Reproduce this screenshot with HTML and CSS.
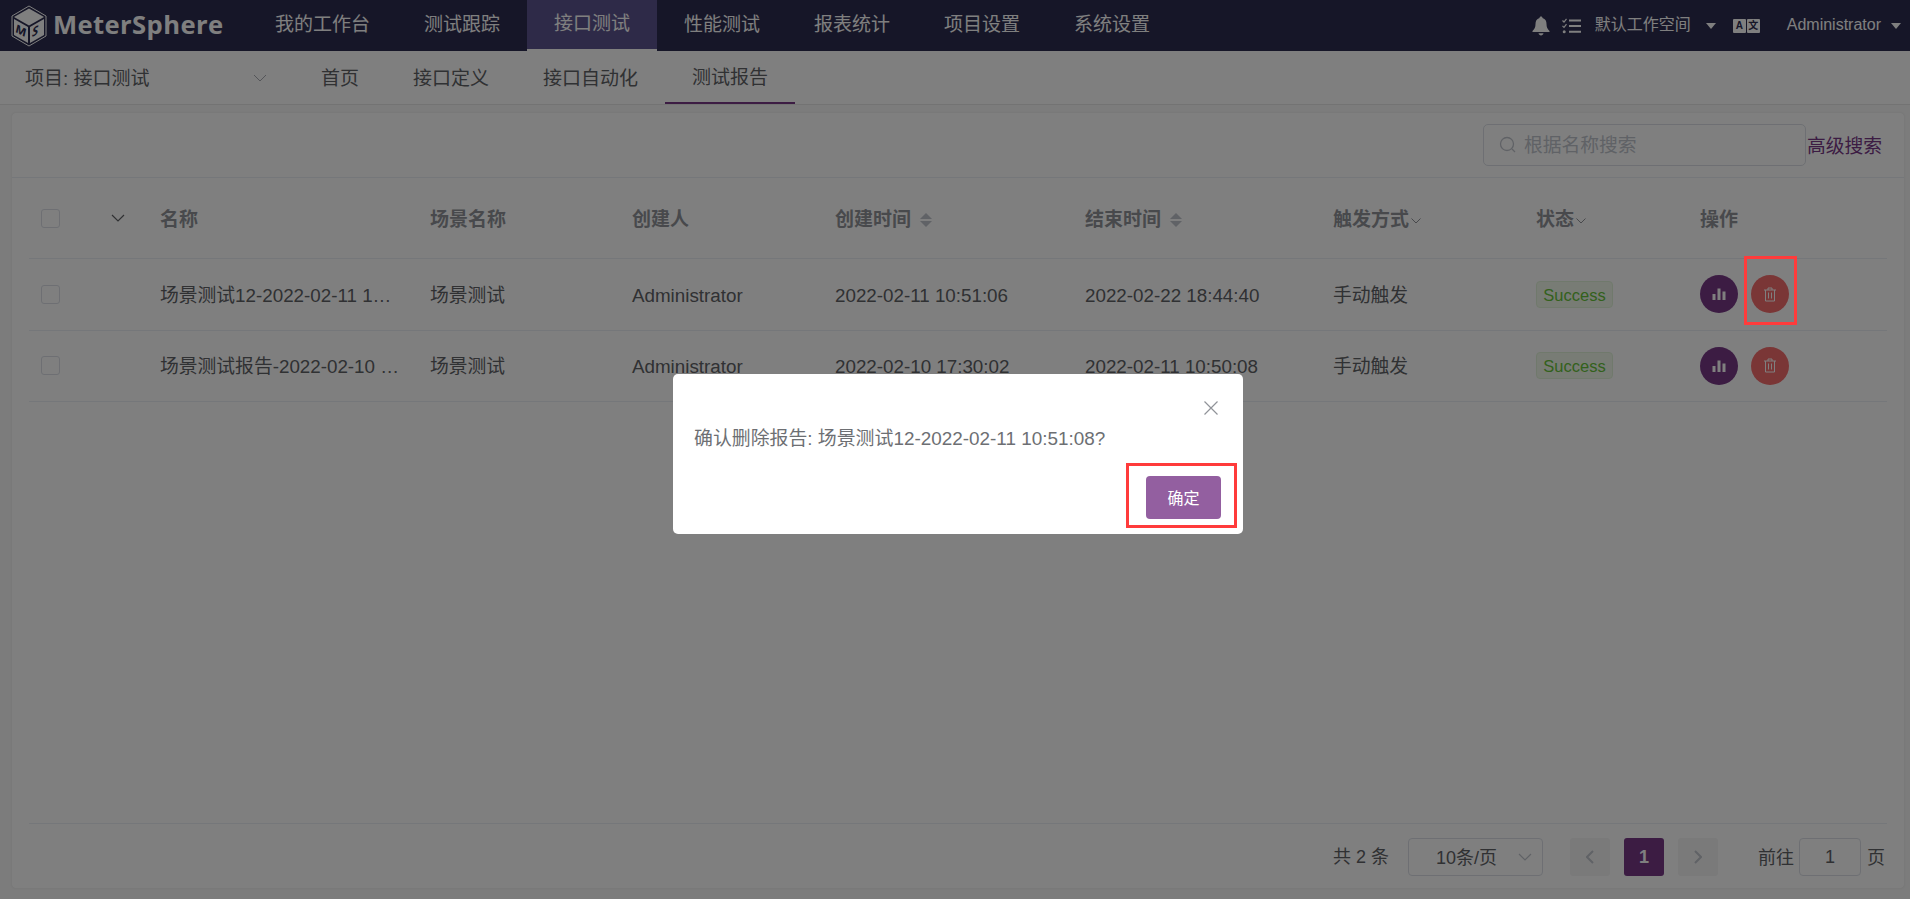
FILE: index.html
```html
<!DOCTYPE html>
<html>
    <head>
        <meta charset="utf-8" />
        <title>MeterSphere｜接口测试｜测试报告</title>
        <link rel="stylesheet" href="styles.css">
    </head>
    <body>
        <!-- 顶部导航 -->
        <header class="topbar">
            <div class="logo">
                <svg class="logo-cube" viewBox="0 0 36 42" width="36" height="42">
                    <path d="M18 1 L35 11 V31 L18 41 L1 31 V11 Z" fill="none" stroke="#fff" stroke-width="1"/>
                    <path d="M18 3.5 L33 12 L18 20.5 L3 12 Z" fill="#fff"/>
                    <path d="M3 14 L17 22 V38 L3 30 Z" fill="#fff"/>
                    <path d="M33 14 L19 22 V38 L33 30 Z" fill="#fff"/>
                    <text class="logo-letter" transform="translate(4.5 27) skewY(28)">M</text>
                    <text class="logo-letter" transform="translate(21 32) skewY(-28)">S</text>
                </svg>
                <span class="logo-text">MeterSphere</span>
            </div>
            <nav class="main-nav">
                <a class="main-nav-item">我的工作台</a>
                <a class="main-nav-item">测试跟踪</a>
                <a class="main-nav-item active">接口测试</a>
                <a class="main-nav-item">性能测试</a>
                <a class="main-nav-item">报表统计</a>
                <a class="main-nav-item">项目设置</a>
                <a class="main-nav-item">系统设置</a>
            </nav>
            <div class="top-right">
                <svg class="top-icon bell" viewBox="0 0 18 20" width="18" height="20">
                    <path d="M9 0.5 C10 0.5 10.5 1.2 10.5 2 C13.5 2.8 14.5 5.2 14.5 8 C14.5 11.5 15.5 13 17.5 15 V16 H0.5 V15 C2.5 13 3.5 11.5 3.5 8 C3.5 5.2 4.5 2.8 7.5 2 C7.5 1.2 8 0.5 9 0.5 Z" fill="#fff"/>
                    <path d="M6.5 17.2 H11.5 C11.2 18.6 10.2 19.4 9 19.4 C7.8 19.4 6.8 18.6 6.5 17.2 Z" fill="#fff"/>
                </svg>
                <svg class="top-icon tasks" viewBox="0 0 19 16" width="19" height="16">
                    <path d="M0.5 2.5 L2 4 L4.5 0.8 M0.5 7.8 L2 9.3 L4.5 6.1" fill="none" stroke="#fff" stroke-width="1.2"/>
                    <circle cx="2.2" cy="13.8" r="1.5" fill="#fff"/>
                    <path d="M7 1.5 H19 V3.4 H7 Z M7 7 H19 V8.9 H7 Z M7 12.8 H19 V14.7 H7 Z" fill="#fff"/>
                </svg>
                <span class="workspace">默认工作空间</span>
                <i class="caret-down workspace-caret"></i>
                <span class="lang-icon"><b class="lang-a">A</b><b class="lang-b">文</b></span>
                <span class="user">Administrator</span>
                <i class="caret-down user-caret"></i>
            </div>
        </header>

        <!-- 二级导航 -->
        <div class="subbar">
            <div class="project-select">
                <span>项目: 接口测试</span>
                <svg class="chevron" viewBox="0 0 14 8" width="14" height="8"><path d="M1 1 L7 7 L13 1" fill="none" stroke="#a8abb2" stroke-width="1"/></svg>
            </div>
            <nav class="sub-nav">
                <a class="sub-nav-item">首页</a>
                <a class="sub-nav-item">接口定义</a>
                <a class="sub-nav-item">接口自动化</a>
                <a class="sub-nav-item active">测试报告</a>
            </nav>
        </div>

        <!-- 报告列表 -->
        <main class="card">
            <div class="toolbar">
                <div class="search-box">
                    <svg viewBox="0 0 18 18" width="18" height="18"><circle cx="8" cy="8" r="6.5" fill="none" stroke="#c0c4cc" stroke-width="1.3"/><path d="M13 13 L16 16" stroke="#c0c4cc" stroke-width="1.3"/></svg>
                    <span class="search-hint">根据名称搜索</span>
                </div>
                <a class="advanced-link">高级搜索</a>
            </div>

            <div class="report-table">
                <div class="row head">
                    <div class="col-check"><span class="checkbox"></span></div>
                    <div class="col-expand"><svg viewBox="0 0 14 8" width="14" height="8"><path d="M1 1 L7 7 L13 1" fill="none" stroke="#606266" stroke-width="1.2"/></svg></div>
                    <div>名称</div>
                    <div>场景名称</div>
                    <div>创建人</div>
                    <div class="sortable">创建时间<span class="sort-carets"><i></i><i></i></span></div>
                    <div class="sortable">结束时间<span class="sort-carets"><i></i><i></i></span></div>
                    <div class="filterable">触发方式<svg viewBox="0 0 10 6" width="10" height="6"><path d="M0.5 0.5 L5 5 L9.5 0.5" fill="none" stroke="#909399" stroke-width="1"/></svg></div>
                    <div class="filterable">状态<svg viewBox="0 0 10 6" width="10" height="6"><path d="M0.5 0.5 L5 5 L9.5 0.5" fill="none" stroke="#909399" stroke-width="1"/></svg></div>
                    <div>操作</div>
                </div>

                <div class="row">
                    <div class="col-check"><span class="checkbox"></span></div>
                    <div class="col-expand"></div>
                    <div class="name-cell">场景测试12-2022-02-11 1…</div>
                    <div>场景测试</div>
                    <div>Administrator</div>
                    <div>2022-02-11 10:51:06</div>
                    <div>2022-02-22 18:44:40</div>
                    <div>手动触发</div>
                    <div class="col-tag"><span class="tag-success">Success</span></div>
                    <div class="actions">
                        <button class="circle-btn report"><svg viewBox="0 0 14 14" width="14" height="14"><path d="M0.5 7 H3.5 V13 H0.5 Z M5.5 1.5 H8.5 V13 H5.5 Z M10.5 4.5 H13.5 V13 H10.5 Z" fill="#fff"/></svg></button>
                        <button class="circle-btn remove"><svg viewBox="0 0 14 15" width="14" height="15"><path d="M1 3 H13 M5 3 V1 H9 V3 M2.5 3 V14 H11.5 V3 M5.5 5.5 V11.5 M8.5 5.5 V11.5" fill="none" stroke="#fff" stroke-width="1"/></svg></button>
                    </div>
                </div>

                <div class="row">
                    <div class="col-check"><span class="checkbox"></span></div>
                    <div class="col-expand"></div>
                    <div class="name-cell">场景测试报告-2022-02-10 …</div>
                    <div>场景测试</div>
                    <div>Administrator</div>
                    <div>2022-02-10 17:30:02</div>
                    <div>2022-02-11 10:50:08</div>
                    <div>手动触发</div>
                    <div class="col-tag"><span class="tag-success">Success</span></div>
                    <div class="actions">
                        <button class="circle-btn report"><svg viewBox="0 0 14 14" width="14" height="14"><path d="M0.5 7 H3.5 V13 H0.5 Z M5.5 1.5 H8.5 V13 H5.5 Z M10.5 4.5 H13.5 V13 H10.5 Z" fill="#fff"/></svg></button>
                        <button class="circle-btn remove"><svg viewBox="0 0 14 15" width="14" height="15"><path d="M1 3 H13 M5 3 V1 H9 V3 M2.5 3 V14 H11.5 V3 M5.5 5.5 V11.5 M8.5 5.5 V11.5" fill="none" stroke="#fff" stroke-width="1"/></svg></button>
                    </div>
                </div>
            </div>

            <!-- 分页 -->
            <div class="pager">
                <span class="pager-total">共 2 条</span>
                <div class="pager-size">
                    <span>10条/页</span>
                    <svg viewBox="0 0 14 8" width="14" height="8"><path d="M1 1 L7 7 L13 1" fill="none" stroke="#c0c4cc" stroke-width="1.2"/></svg>
                </div>
                <span class="pager-btn prev"><svg viewBox="0 0 8 14" width="8" height="14"><path d="M7 1 L1 7 L7 13" fill="none" stroke="#c0c4cc" stroke-width="2"/></svg></span>
                <span class="pager-num">1</span>
                <span class="pager-btn"><svg viewBox="0 0 8 14" width="8" height="14"><path d="M1 1 L7 7 L1 13" fill="none" stroke="#c0c4cc" stroke-width="2"/></svg></span>
                <span class="pager-goto">前往</span>
                <span class="pager-input">1</span>
                <span class="pager-unit">页</span>
            </div>
        </main>

        <!-- 遮罩與確認視窗 -->
        <div class="overlay"></div>
        <div class="mark mark-delete"></div>
        <div class="dialog">
            <svg class="dialog-close" viewBox="0 0 14 14" width="14" height="14"><path d="M0.5 0.5 L13.5 13.5 M13.5 0.5 L0.5 13.5" stroke="#909399" stroke-width="1.2"/></svg>
            <p class="dialog-text">确认删除报告: 场景测试12-2022-02-11 10:51:08?</p>
            <div class="dialog-footer">
                <button class="confirm-btn">确定</button>
                <div class="mark mark-confirm"></div>
            </div>
        </div>
    </body>
</html>
```

FILE: styles.css
```css
* {
    box-sizing: border-box;
}

html, body {
    height: 100%;
}

body {
    display: flex;
    flex-direction: column;
    margin: 0;
    height: 899px;
    overflow: hidden;
    background-color: #f8f8f8;
    color: #606266;
    font-family: "Liberation Sans", "Noto Sans CJK SC", sans-serif;
    font-size: 18.8px;
    line-height: 26px;
}

/* 顶部导航 */
.topbar {
    display: flex;
    align-items: center;
    flex: none;
    height: 51px;
    background-color: #2c2c50;
    color: #fff;
}

.logo {
    display: flex;
    align-items: center;
    gap: 6px;
    flex: none;
    width: 248px;
    padding-left: 11px;
}

.logo-letter {
    font-family: "Open Sans", sans-serif;
    font-size: 12px;
    font-weight: 700;
    font-style: italic;
    fill: #2c2c50;
}

.logo-text {
    margin-top: -2px;
    font-family: "Open Sans", sans-serif;
    font-size: 25.6px;
    font-weight: 700;
    letter-spacing: 0.4px;
}

.main-nav {
    display: flex;
    height: 100%;
}

.main-nav-item {
    display: flex;
    align-items: center;
    justify-content: center;
    padding: 0 27px 1px;
    height: 100%;
    font-size: 19px;
    color: #fff;
}

.main-nav-item.active {
    background-color: #5d5590;
    border-bottom: 2px solid #fff;
}

.top-right {
    display: flex;
    align-items: center;
    margin-left: auto;
    font-size: 16px;
}

.top-icon {
    flex: none;
}

.tasks {
    margin-left: 12px;
}

.workspace {
    margin-left: 14px;
    margin-bottom: 2px;
}

.caret-down {
    width: 0;
    height: 0;
    border-left: 5.5px solid transparent;
    border-right: 5.5px solid transparent;
    border-top: 6px solid #fff;
}

.workspace-caret {
    margin-left: 15px;
}

.lang-icon {
    display: flex;
    gap: 1px;
    margin-left: 17px;
}

.lang-icon b {
    display: flex;
    align-items: center;
    justify-content: center;
    width: 13px;
    height: 14px;
    border-radius: 1px;
    background-color: #fff;
    color: #2c2c50;
    font-size: 10px;
}

.user {
    margin-left: 27px;
    margin-bottom: 2px;
}

.user-caret {
    margin-left: 10px;
    margin-right: 9px;
}

/* 二级导航 */
.subbar {
    display: flex;
    flex: none;
    height: 54px;
    background-color: #fff;
    border-bottom: 1px solid #e6e6e6;
}

.project-select {
    display: flex;
    align-items: center;
    justify-content: space-between;
    width: 267px;
    padding-left: 25px;
    font-size: 19px;
}

.project-select span {
    padding-top: 2px;
}

.sub-nav {
    display: flex;
    margin-left: 27px;
}

.sub-nav-item {
    display: flex;
    align-items: center;
    padding: 3px 27px 0;
    height: 53px;
    font-size: 19px;
}

.sub-nav-item.active {
    border-bottom: 2px solid #783887;
}

/* 报告列表 */
.card {
    display: flex;
    flex-direction: column;
    margin: 8px 6px 11px 12px;
    flex: 1;
    min-height: 0;
    padding: 0 17px;
    background-color: #fff;
    border-radius: 4px;
    box-shadow: 0 0 2px rgba(0, 0, 0, 0.1);
}

.toolbar {
    display: flex;
    align-items: flex-start;
    justify-content: flex-end;
    flex: none;
    height: 65px;
    margin: 0 -17px;
    padding: 11px 22px 0 0;
    border-bottom: 1px solid #ebeef5;
}

.search-box {
    display: flex;
    align-items: center;
    gap: 7px;
    width: 323px;
    height: 42px;
    padding-left: 15px;
    border: 1px solid #dcdfe6;
    border-radius: 5px;
    color: #c0c4cc;
}

.search-hint {
    padding-top: 1px;
}

.advanced-link {
    margin-top: 10px;
    margin-left: 1px;
    color: #783887;
}

.report-table {
    flex: 1;
}

.row {
    display: grid;
    grid-template-columns: 71px 60px 270px 202px 203px 250px 248px 203px 164px 1fr;
    align-items: center;
    height: 71.5px;
    border-bottom: 1px solid #ebeef5;
}

.row > div {
    padding-top: 3px;
}

.row.head {
    height: 81px;
    color: #909399;
    font-weight: 700;
    font-size: 19px;
}

.row > .col-check {
    display: flex;
    padding: 0 0 0 12px;
}

.row > .col-expand {
    display: flex;
    padding: 0 0 0 11px;
}

.row > .col-tag, .row > .actions {
    padding-top: 0;
}

.checkbox {
    display: block;
    width: 19px;
    height: 19px;
    border: 1px solid #dcdfe6;
    border-radius: 3px;
    background-color: #fff;
}

.name-cell {
    white-space: nowrap;
}

.sortable, .filterable {
    display: flex;
    align-items: center;
}

.filterable svg {
    margin-left: 2px;
    margin-top: 3px;
}

.sort-carets {
    display: flex;
    flex-direction: column;
    gap: 2px;
    margin-left: 9px;
}

.sort-carets i {
    width: 0;
    height: 0;
    border-left: 6.5px solid transparent;
    border-right: 6.5px solid transparent;
    border-bottom: 6.5px solid #c0c4cc;
}

.sort-carets i + i {
    border-bottom: 0;
    border-top: 6.5px solid #c0c4cc;
}

.tag-success {
    display: block;
    width: 77px;
    height: 27px;
    line-height: 27px;
    border: 1px solid #e1f3d8;
    border-radius: 4px;
    background-color: #f0f9eb;
    color: #67c23a;
    font-size: 16.5px;
    text-align: center;
}

.actions {
    display: flex;
    gap: 13px;
}

.circle-btn {
    display: flex;
    align-items: center;
    justify-content: center;
    width: 38px;
    height: 38px;
    padding: 0;
    border: none;
    border-radius: 50%;
}

.circle-btn.report {
    background-color: #783887;
}

.circle-btn.remove {
    background-color: #f56c6c;
}

/* 分页 */
.pager {
    display: flex;
    align-items: center;
    flex: none;
    height: 65px;
    padding-top: 1px;
    border-top: 1px solid #ebeef5;
    font-size: 18px;
}

.pager-total {
    margin-left: 1304px;
    width: 75px;
}

.pager-size {
    display: flex;
    align-items: center;
    justify-content: space-between;
    width: 135px;
    height: 38px;
    padding: 0 10px 0 27px;
    border: 1px solid #dcdfe6;
    border-radius: 4px;
}

.pager-size span, .pager-goto, .pager-unit {
    padding-top: 2px;
}

.pager-btn, .pager-num {
    display: flex;
    align-items: center;
    justify-content: center;
    width: 40px;
    height: 38px;
    border-radius: 3px;
    background-color: #f4f4f5;
}

.pager-btn.prev {
    margin-left: 27px;
}

.pager-num {
    margin: 0 14px;
    background-color: #783887;
    color: #fff;
    font-weight: 700;
}

.pager-goto {
    margin-left: 40px;
}

.pager-input {
    width: 62px;
    height: 38px;
    margin-left: 5px;
    line-height: 36px;
    border: 1px solid #dcdfe6;
    border-radius: 4px;
    text-align: center;
}

.pager-unit {
    margin-left: 6px;
}

/* 遮罩與確認視窗 */
.overlay {
    position: fixed;
    inset: 0;
    background-color: rgba(0, 0, 0, 0.5);
}

.mark {
    position: absolute;
    border: 3px solid #ff3b3b;
}

.mark-delete {
    left: 1744px;
    top: 256px;
    width: 53px;
    height: 69px;
}

.dialog {
    position: absolute;
    left: 673px;
    top: 374px;
    display: flex;
    flex-direction: column;
    width: 570px;
    height: 160px;
    padding: 0 22px 15px 21px;
    background-color: #fff;
    border-radius: 5px;
}

.dialog-close {
    position: absolute;
    top: 27px;
    right: 25px;
}

.dialog-text {
    margin: 52px 0 0;
    font-size: 18.9px;
    color: #6d6f73;
}

.dialog-footer {
    position: relative;
    display: flex;
    justify-content: flex-end;
    margin-top: auto;
}

.confirm-btn {
    width: 75px;
    height: 43px;
    padding: 0 0 2px;
    border: none;
    border-radius: 4px;
    background-color: #935fa0;
    color: #fff;
    font-family: inherit;
    font-size: 16px;
    font-weight: 400;
}

.mark-confirm {
    right: -16px;
    top: -13px;
    width: 111px;
    height: 65px;
}
```
